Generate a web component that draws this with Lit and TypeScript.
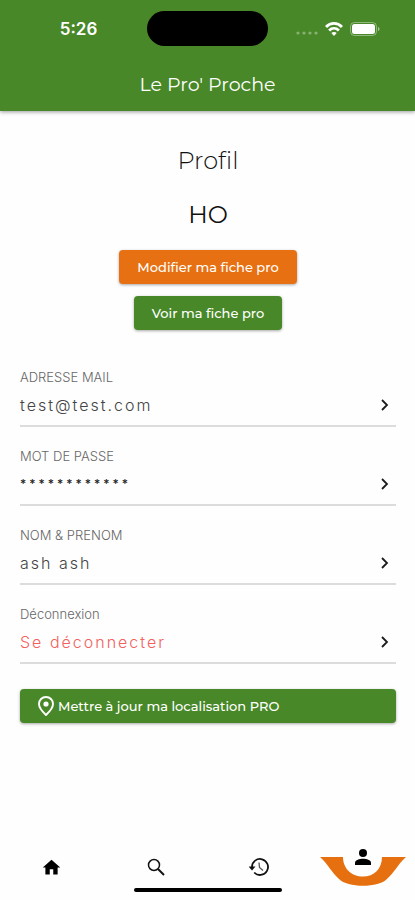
import { LitElement, html, css, svg } from "lit";
import { customElement, property } from "lit/decorators.js";

@customElement("status-bar")
class StatusBar extends LitElement {
  static styles = css`
    :host {
      display: grid;
      grid-template-columns: 1fr 121px 1fr;
      align-items: center;
      height: 35px;
      color: #fff;
    }
    .time {
      text-align: center;
      font-family: Inter, sans-serif;
      font-size: 17px;
      font-weight: 600;
      line-height: 20px;
      padding-left: 10px;
    }
    .island {
      height: 35px;
      border-radius: 18px;
      background: #000;
    }
    .signals {
      display: flex;
      align-items: center;
      justify-content: flex-end;
      gap: 7px;
      padding-right: 35px;
    }
    svg { display: block; }
  `;
  render() {
    return html`
      <div class="time">5:26</div>
      <div class="island"></div>
      <div class="signals">
        <svg width="22" height="14" viewBox="0 0 22 14" fill="#fff" opacity=".35">
          ${[2, 8, 14, 20].map((x) => svg`<circle cx=${x} cy="11" r="1.6" />`)}
        </svg>
        <svg width="18" height="14" viewBox="0 0 18 14" fill="none" stroke="#fff" stroke-width="2.8">
          <path d="M1 5C5.500 .2 12.500 .2 17 5" />
          <path d="M4.100 8.500C7 5.700 11 5.700 13.900 8.500" />
          <path d="M9 14L6.300 11C7.800 9.500 10.200 9.500 11.700 11Z" fill="#fff" stroke="none" />
        </svg>
        <svg width="30" height="14" viewBox="0 0 30 14">
          <rect x=".5" y=".5" width="26" height="13" rx="4" fill="none" stroke="#fff" opacity=".4" />
          <rect x="2" y="2" width="23" height="10" rx="2.500" fill="#fff" />
          <path d="M28 5C30 5.500 30 8.500 28 9Z" fill="#fff" opacity=".5" />
        </svg>
      </div>
    `;
  }
}

@customElement("profile-row")
class ProfileRow extends LitElement {
  @property() label = "";
  @property() value = "";
  @property() kind = "";

  static styles = css`
    :host { display: block; }
    .row {
      display: block;
      width: 100%;
      padding: 18px 0 8px;
      border: 0;
      border-bottom: 2px solid #dcdcdc;
      background: none;
      font-family: Inter, sans-serif;
      text-align: left;
      cursor: pointer;
    }
    .label {
      display: block;
      font-size: 13px;
      line-height: 22px;
      font-weight: 300;
      color: #666;
    }
    .line {
      display: flex;
      align-items: center;
      justify-content: space-between;
      margin-top: 5px;
      padding-right: 7px;
      height: 24px;
    }
    .value {
      font-size: 16px;
      line-height: 24px;
      font-weight: 300;
      letter-spacing: 2px;
      color: #444;
    }
    .secret { font-size: 12px; font-weight: 500; letter-spacing: 3px; color: #222; }
    .danger { color: #f2605f; }
    svg { display: block; }
  `;
  render() {
    return html`
      <button class="row" type="button">
        <span class="label">${this.label}</span>
        <span class="line">
          <span class="value ${this.kind}">${this.value}</span>
          <svg width="9" height="12" viewBox="0 0 9 12" fill="none" stroke="#1c1c1c" stroke-width="1.800">
            <path d="M2 1L7 6L2 11" />
          </svg>
        </span>
      </button>
    `;
  }
}

@customElement("bottom-nav")
class BottomNav extends LitElement {
  static styles = css`
    :host { display: block; }
    nav {
      display: grid;
      grid-template-columns: repeat(4, 1fr);
      height: 40px;
    }
    a {
      display: flex;
      align-items: center;
      justify-content: center;
      color: #000;
    }
    .indicator {
      width: 148px;
      height: 4px;
      margin: 1px auto 8px;
      border-radius: 2px;
      background: #000;
    }
    svg { display: block; }
  `;
  render() {
    return html`
      <nav>
        <a href="#accueil" aria-label="Accueil">
          <svg width="21" height="21" viewBox="0 0 24 24"><path d="M10 20v-6h4v6h5v-8h3L12 3 2 12h3v8z" /></svg>
        </a>
        <a href="#recherche" aria-label="Recherche">
          <svg width="18" height="18" viewBox="0 0 18 18" fill="none" stroke="#111" stroke-width="1.500">
            <circle cx="7" cy="7" r="5.500" />
            <path d="M11 11L17 17" stroke-width="1.900" />
          </svg>
        </a>
        <a href="#historique" aria-label="Historique">
          <svg width="20" height="20" viewBox="0 0 20 20" fill="none" stroke="#111" stroke-width="1.800">
            <path d="M3 10A8 8 0 1 1 5.200 15.500" />
            <path d="M-.5 9.500H6.500L3 13.500Z" fill="#111" stroke="none" />
            <path d="M10 5.500L10.500 10.500L14 13.500" stroke="#555" stroke-width="1.300" />
          </svg>
        </a>
        <a href="#profil" aria-label="Profil" aria-current="page">
          <svg width="86" height="40" viewBox="0 0 86 40">
            <path fill="#e6700f" d="M0 10H23C23 22 32 29.500 43 29.500S62 22 62 10H86C78 17 74 26 67 32C59 41 27 41 19 32C12 26 8 17 0 10Z" />
            <circle cx="43" cy="6" r="4" />
            <path d="M35 18V15.500C36 10.500 50 10.500 51 15.500V18Z" />
          </svg>
        </a>
      </nav>
      <div class="indicator"></div>
    `;
  }
}

@customElement("app-root")
class AppRoot extends LitElement {
  static styles = css`
    :host {
      display: flex;
      flex-direction: column;
      min-height: 100vh;
      background: #fefefe;
      color: #111;
      font-family: Montserrat, Inter, "Open Sans", sans-serif;
    }
    header {
      padding: 11px 0 13px;
      background: #488828;
      box-shadow: 0 1px 4px rgba(0, 0, 0, 0.4);
    }
    .brand {
      margin-top: 26px;
      text-align: center;
      font-size: 19px;
      line-height: 26px;
      color: #fff;
    }
    main {
      flex: 1;
      display: flex;
      flex-direction: column;
      padding: 35px 19px 24px 20px;
    }
    h1, h2 {
      margin: 0;
      text-align: center;
      font-size: 24px;
      line-height: 30px;
      font-weight: 300;
    }
    h2 {
      margin-top: 24px;
      font-weight: 400;
    }
    .actions {
      display: flex;
      flex-direction: column;
      align-items: center;
      gap: 12px;
      margin: 20px 0 18px;
    }
    .btn {
      height: 34px;
      padding: 0 18px;
      border: 0;
      border-radius: 4px;
      background: #488828;
      box-shadow: 0 1px 3px rgba(0, 0, 0, 0.35);
      color: #fff;
      font: inherit;
      font-size: 13px;
      font-weight: 500;
      cursor: pointer;
    }
    .edit { background: #e77112; }
    .locate {
      display: flex;
      align-items: center;
      gap: 4px;
      margin-top: 25px;
    }
  `;
  render() {
    return html`
      <header>
        <status-bar></status-bar>
        <div class="brand">Le Pro' Proche</div>
      </header>
      <main>
        <h1>Profil</h1>
        <h2>HO</h2>
        <div class="actions">
          <button class="btn edit" type="button">Modifier ma fiche pro</button>
          <button class="btn" type="button">Voir ma fiche pro</button>
        </div>
        <profile-row label="ADRESSE MAIL" value="test@test.com"></profile-row>
        <profile-row label="MOT DE PASSE" value="************" kind="secret"></profile-row>
        <profile-row label="NOM &amp; PRENOM" value="ash ash"></profile-row>
        <profile-row label="Déconnexion" value="Se déconnecter" kind="danger"></profile-row>
        <button class="btn locate" type="button">
          <svg width="16" height="20" viewBox="0 0 16 20">
            <path d="M8 1C4 1 1 4 1 8C1 12.500 8 19 8 19S15 12.500 15 8C15 4 12 1 8 1Z" fill="none" stroke="#fff" stroke-width="1.900" />
            <circle cx="8" cy="8" r="2.600" fill="#fff" />
          </svg>
          Mettre à jour ma localisation PRO
        </button>
      </main>
      <bottom-nav></bottom-nav>
    `;
  }
}
